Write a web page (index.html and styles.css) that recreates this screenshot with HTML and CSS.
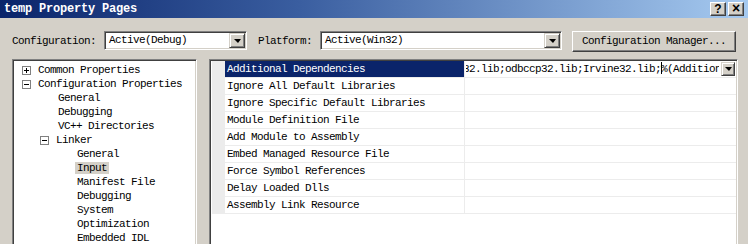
FILE: index.html
```html
<!DOCTYPE html>
<html>
<head>
<meta charset="utf-8">
<link rel="stylesheet" href="styles.css">
</head>
<body>
<div class="window">
  <div class="titlebar">
    <span class="title">temp Property Pages</span>
    <div class="capbtns">
      <span class="capbtn">?</span>
      <span class="capbtn x">×</span>
    </div>
  </div>
  <div class="toolbar">
    <span class="label cfg-label">Configuration:</span>
    <div class="combo combo-cfg"><span class="combo-text">Active(Debug)</span><span class="ddbtn"><span class="arrow"></span></span></div>
    <span class="label plat-label">Platform:</span>
    <div class="combo combo-plat"><span class="combo-text">Active(Win32)</span><span class="ddbtn"><span class="arrow"></span></span></div>
    <div class="button cfgmgr">Configuration Manager...</div>
  </div>
  <div class="main">
    <div class="tree">
      <div class="node l0"><span class="exp plus"></span><span class="txt">Common Properties</span></div>
      <div class="node l0"><span class="exp minus"></span><span class="txt">Configuration Properties</span></div>
      <div class="node l1"><span class="txt">General</span></div>
      <div class="node l1"><span class="txt">Debugging</span></div>
      <div class="node l1"><span class="txt">VC++ Directories</span></div>
      <div class="node l1b"><span class="exp minus"></span><span class="txt">Linker</span></div>
      <div class="node l2"><span class="txt">General</span></div>
      <div class="node l2"><span class="txt sel">Input</span></div>
      <div class="node l2"><span class="txt">Manifest File</span></div>
      <div class="node l2"><span class="txt">Debugging</span></div>
      <div class="node l2"><span class="txt">System</span></div>
      <div class="node l2"><span class="txt">Optimization</span></div>
      <div class="node l2"><span class="txt">Embedded IDL</span></div>
    </div>
    <div class="grid">
      <div class="rows">
        <div class="row active"><div class="gut"></div><div class="name">Additional Dependencies</div><div class="val"><div class="valtext"><span class="scroll">32.lib;odbccp32.lib;Irvine32.lib;<span class="caret"></span>%(AdditionalDependencies)</span></div><span class="valbtn"><span class="arrow"></span></span></div></div>
        <div class="row"><div class="gut"></div><div class="name">Ignore All Default Libraries</div><div class="val"></div></div>
        <div class="row"><div class="gut"></div><div class="name">Ignore Specific Default Libraries</div><div class="val"></div></div>
        <div class="row"><div class="gut"></div><div class="name">Module Definition File</div><div class="val"></div></div>
        <div class="row"><div class="gut"></div><div class="name">Add Module to Assembly</div><div class="val"></div></div>
        <div class="row"><div class="gut"></div><div class="name">Embed Managed Resource File</div><div class="val"></div></div>
        <div class="row"><div class="gut"></div><div class="name">Force Symbol References</div><div class="val"></div></div>
        <div class="row"><div class="gut"></div><div class="name">Delay Loaded Dlls</div><div class="val"></div></div>
        <div class="row"><div class="gut"></div><div class="name">Assembly Link Resource</div><div class="val"></div></div>
      </div>
    </div>
  </div>
</div>
</body>
</html>
```

FILE: styles.css
```css
html, body {
  margin: 0;
  padding: 0;
  background: #d4d0c8;
  overflow: hidden;
}
.window {
  width: 748px;
  height: 244px;
  overflow: hidden;
  font-family: "Liberation Mono", "DejaVu Sans Mono", monospace;
  font-size: 11px;
  letter-spacing: -0.6px;
  color: #000;
}
.titlebar {
  height: 18px;
  background: linear-gradient(to right, #0a246a 0%, #3a5ea0 40%, #a6caf0 100%);
  display: flex;
  align-items: center;
  justify-content: space-between;
}
.title {
  color: #fff;
  font-weight: bold;
  font-size: 12px;
  letter-spacing: -0.2px;
  padding-left: 4px;
}
.capbtns {
  display: flex;
  gap: 2px;
  padding-right: 4px;
  align-items: center;
}
.capbtn {
  width: 16px;
  height: 14px;
  box-sizing: border-box;
  background: #d4d0c8;
  border-top: 1px solid #fff;
  border-left: 1px solid #fff;
  border-right: 1px solid #404040;
  border-bottom: 1px solid #404040;
  box-shadow: inset -1px -1px 0 #808080;
  font-family: "Liberation Sans", sans-serif;
  font-weight: bold;
  font-size: 12px;
  line-height: 12px;
  text-align: center;
  letter-spacing: 0;
}
.capbtn.x { font-size: 14px; line-height: 11px; }
.toolbar {
  display: flex;
  align-items: flex-start;
  margin-top: 13px;
  height: 21px;
}
.label {
  line-height: 21px;
}
.cfg-label { margin-left: 12px; width: 92px; }
.plat-label { margin-left: 11px; width: 62px; }
.combo {
  height: 19px;
  box-sizing: border-box;
  background: #fff;
  border-top: 1px solid #808080;
  border-left: 1px solid #808080;
  border-right: 1px solid #fff;
  border-bottom: 1px solid #fff;
  box-shadow: inset 1px 1px 0 #404040, inset -1px -1px 0 #d4d0c8;
  display: flex;
  align-items: center;
  justify-content: space-between;
  padding: 1px;
}
.combo-cfg { width: 143px; }
.combo-plat { width: 242px; }
.combo-text { padding-left: 3px; line-height: 15px; }
.ddbtn, .valbtn {
  width: 16px;
  height: 15px;
  box-sizing: border-box;
  background: #d4d0c8;
  border-top: 1px solid #d4d0c8;
  border-left: 1px solid #d4d0c8;
  border-right: 1px solid #404040;
  border-bottom: 1px solid #404040;
  box-shadow: inset 1px 1px 0 #fff, inset -1px -1px 0 #808080;
  display: flex;
  align-items: center;
  justify-content: center;
}
.arrow {
  width: 0;
  height: 0;
  border-left: 4px solid transparent;
  border-right: 3px solid transparent;
  border-top: 4px solid #000;
}
.button {
  box-sizing: border-box;
  height: 21px;
  background: #d4d0c8;
  border-top: 1px solid #fff;
  border-left: 1px solid #fff;
  border-right: 1px solid #404040;
  border-bottom: 1px solid #404040;
  box-shadow: inset -1px -1px 0 #808080;
  text-align: center;
  line-height: 19px;
}
.cfgmgr { width: 164px; margin-left: 10px; }
.main {
  display: flex;
  margin-top: 7px;
  margin-left: 12px;
  gap: 12px;
}
.tree, .grid {
  height: 200px;
  box-sizing: border-box;
  background: #fff;
  border-top: 1px solid #808080;
  border-left: 1px solid #808080;
  border-right: 1px solid #fff;
  border-bottom: 1px solid #fff;
  box-shadow: inset 1px 1px 0 #404040, inset -1px -1px 0 #d4d0c8;
}
.tree {
  width: 185px;
  padding: 3px 2px 0 2px;
}
.node {
  height: 14px;
  display: flex;
  align-items: center;
  white-space: nowrap;
}
.node.l0 { padding-left: 7px; }
.node.l1 { padding-left: 43px; }
.node.l1b { padding-left: 25px; }
.node.l2 { padding-left: 60px; }
.exp {
  width: 9px;
  height: 9px;
  box-sizing: border-box;
  border: 1px solid #808080;
  margin-right: 7px;
  position: relative;
  background: #fff;
}
.exp::before {
  content: "";
  position: absolute;
  left: 1px;
  top: 3px;
  width: 5px;
  height: 1px;
  background: #000;
}
.exp.plus::after {
  content: "";
  position: absolute;
  left: 3px;
  top: 1px;
  width: 1px;
  height: 5px;
  background: #000;
}
.l2 .txt { padding: 0 2px; line-height: 12px; }
.txt.sel { background: #d4d0c8; }
.grid {
  width: 529px;
  padding: 1px 1px 0 2px;
}
.rows {
  display: flex;
  flex-direction: column;
}
.row {
  display: flex;
  height: 17px;
  box-sizing: border-box;
  border-bottom: 1px solid #ececec;
}
.gut {
  width: 13px;
  flex: none;
  background: #ececec;
  margin-bottom: -1px;
}
.name {
  width: 240px;
  flex: none;
  padding-left: 2px;
  box-sizing: border-box;
  line-height: 16px;
  border-right: 1px solid #ececec;
  white-space: nowrap;
  overflow: hidden;
}
.row.active .name {
  background: #0a246a;
  color: #fff;
}
.val {
  flex: 1;
  display: flex;
  align-items: center;
  min-width: 0;
}
.valtext {
  flex: 1;
  overflow: hidden;
  white-space: nowrap;
  line-height: 16px;
  margin-left: 1px;
  margin-right: 2px;
}
.scroll { margin-left: -3px; position: relative; }
.caret {
  display: inline-block;
  width: 1px;
  height: 12px;
  background: #000;
  vertical-align: -2px;
  margin-right: -1px;
}
.valbtn {
  width: 14px;
  height: 14px;
  margin-right: 1px;
  flex: none;
}
```
